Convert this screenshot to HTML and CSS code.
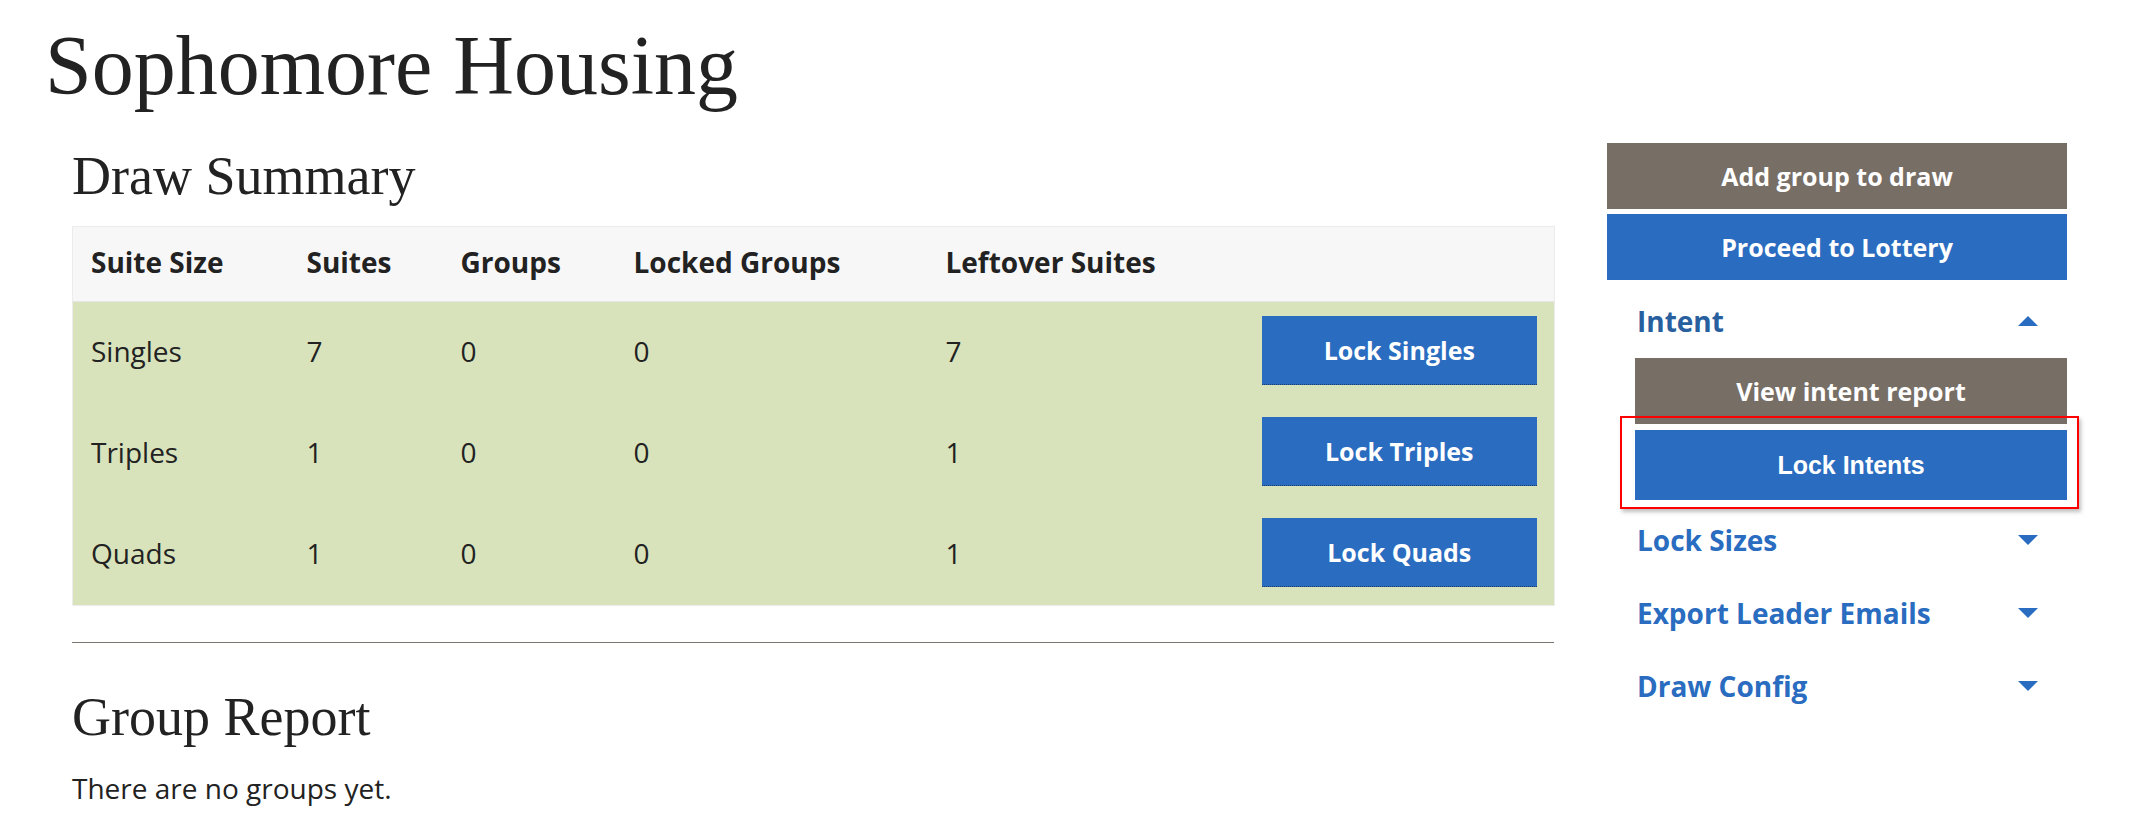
FILE: index.html
```html
<!DOCTYPE html>
<html lang="en">
<head>
<meta charset="utf-8">
<title>Sophomore Housing</title>
<link rel="stylesheet" href="styles.css">
</head>
<body>
<div class="page">
  <h1 class="page-title">Sophomore Housing</h1>
  <div class="layout">
    <main class="main">
      <h2 class="section-title">Draw Summary</h2>
      <table class="summary">
        <colgroup>
          <col class="c1"><col class="c2"><col class="c3"><col class="c4"><col class="c5"><col class="c6">
        </colgroup>
        <thead>
          <tr><th>Suite Size</th><th>Suites</th><th>Groups</th><th>Locked Groups</th><th>Leftover Suites</th><th></th></tr>
        </thead>
        <tbody>
          <tr><td>Singles</td><td>7</td><td>0</td><td>0</td><td>7</td><td><button class="btn btn-blue btn-table">Lock Singles</button></td></tr>
          <tr><td>Triples</td><td>1</td><td>0</td><td>0</td><td>1</td><td><button class="btn btn-blue btn-table">Lock Triples</button></td></tr>
          <tr><td>Quads</td><td>1</td><td>0</td><td>0</td><td>1</td><td><button class="btn btn-blue btn-table">Lock Quads</button></td></tr>
        </tbody>
      </table>
      <hr class="divider">
      <h2 class="section-title section-title-2">Group Report</h2>
      <p class="empty">There are no groups yet.</p>
    </main>
    <aside class="sidebar">
      <button class="btn btn-brown btn-side">Add group to draw</button>
      <button class="btn btn-blue btn-side">Proceed to Lottery</button>
      <div class="acc-head acc-open">
        <span>Intent</span>
        <span class="caret caret-up"></span>
      </div>
      <div class="acc-body">
        <button class="btn btn-brown btn-side">View intent report</button>
        <div class="highlight-wrap">
          <button class="btn btn-blue btn-side btn-tall">Lock Intents</button>
          <div class="highlight"></div>
        </div>
      </div>
      <div class="acc-head">
        <span>Lock Sizes</span>
        <span class="caret"></span>
      </div>
      <div class="acc-head">
        <span>Export Leader Emails</span>
        <span class="caret"></span>
      </div>
      <div class="acc-head">
        <span>Draw Config</span>
        <span class="caret"></span>
      </div>
    </aside>
  </div>
</div>
</body>
</html>
```
FILE: styles.css
```css
html, body {
  margin: 0;
  padding: 0;
  background: #fff;
}
body {
  font-family: "Open Sans", "Liberation Sans", sans-serif;
  color: #222;
}
.page {
  padding: 24px 74px 0 48px;
}
.page-title {
  font-family: "Liberation Serif", "Times New Roman", serif;
  font-weight: normal;
  font-size: 84px;
  line-height: 1;
  margin: 0 0 0 -3px;
  color: #222;
}
.layout {
  display: flex;
  align-items: flex-start;
  gap: 53px;
}
.main {
  width: 1482px;
  padding-left: 24px;
  flex: none;
}
.section-title {
  font-family: "Liberation Serif", "Times New Roman", serif;
  font-weight: normal;
  font-size: 54px;
  line-height: 1;
  margin: 41px 0 23px;
  color: #222;
}
.section-title-2 {
  margin: 47px 0 24px;
}
.summary {
  width: 1482px;
  table-layout: fixed;
  border-collapse: collapse;
  font-size: 28px;
  border: 1px solid #ececec;
}
.summary .c1 { width: 216px; }
.summary .c2 { width: 154px; }
.summary .c3 { width: 173px; }
.summary .c4 { width: 312px; }
.summary .c5 { width: 316px; }
.summary .c6 { width: 311px; }
.summary thead tr {
  background: #f7f7f7;
  height: 75px;
}
.summary th {
  text-align: left;
  font-weight: bold;
  padding: 0 18px 5px;
  color: #222;
  border-bottom: 1px solid #e6e6e6;
}
.summary tbody tr {
  background: #d9e3bb;
  height: 101px;
}
.summary td {
  padding: 14px 18px 18px;
  vertical-align: middle;
  color: #222;
}
.summary td:last-child {
  padding-right: 17px;
}
.btn {
  font-family: "Open Sans", "Liberation Sans", sans-serif;
  font-weight: bold;
  color: #fff;
  border: 0;
  display: block;
  width: 100%;
  text-align: center;
  cursor: pointer;
  padding: 0;
}
.btn-blue { background: #2a6cbf; }
.btn-brown { background: #776e66; }
.btn-table {
  height: 69px;
  font-size: 25px;
  border-bottom: 1px dotted #203f66;
}
.divider {
  border: 0;
  border-top: 1px solid #7a7570;
  margin: 36px 0 0;
}
.empty {
  font-size: 28px;
  line-height: 40px;
  margin: 0;
}
.sidebar {
  width: 460px;
  flex: none;
  margin-top: 35px;
  display: flex;
  flex-direction: column;
}
.btn-side {
  height: 66px;
  font-size: 25px;
}
.sidebar > .btn + .btn {
  margin-top: 5px;
}
.acc-head {
  height: 73px;
  display: flex;
  align-items: center;
  justify-content: space-between;
  padding: 0 29px 0 30px;
  font-size: 28px;
  font-weight: bold;
  color: #2a6cbf;
}
.acc-open {
  margin-top: 4px;
  color: #28609f;
}
.acc-body {
  padding-left: 28px;
  margin-top: 1px;
  margin-bottom: 3px;
}
.highlight-wrap {
  position: relative;
  margin-top: 6px;
}
.btn-tall {
  height: 70px;
  font-family: "Liberation Sans", Arial, sans-serif;
}
.highlight {
  position: absolute;
  left: -15px;
  top: -14px;
  right: -12px;
  bottom: -9px;
  border: 2px solid #f00;
  box-shadow: 2px 3px 4px rgba(0, 0, 0, 0.25);
  pointer-events: none;
}
.caret {
  width: 0;
  height: 0;
  border-left: 10px solid transparent;
  border-right: 10px solid transparent;
  border-top: 10px solid #2a6cbf;
}
.caret-up {
  border-top: 0;
  border-bottom: 10px solid #2a6cbf;
}
```
